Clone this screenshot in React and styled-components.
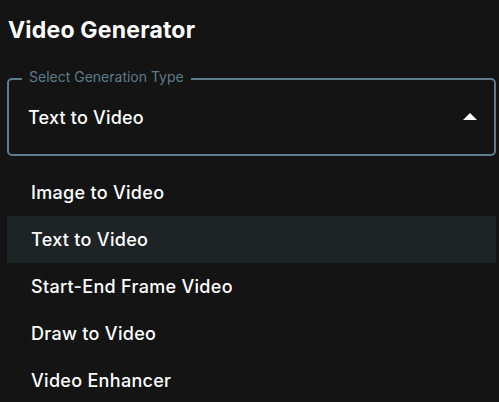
import React, { useState } from "react";
import styled, { createGlobalStyle } from "styled-components";

const GlobalStyle = createGlobalStyle`
    html, body {
        margin: 0;
        padding: 0;
        background: #141414;
        font-family: Inter, "Noto Sans", sans-serif;
        color: #ffffff;
    }
`;

const Page = styled.div`
    width: 499px;
    height: 402px;
    overflow: hidden;
    padding: 17px 3px 0 7px;
    box-sizing: border-box;
`;

const Title = styled.h1`
    margin: 0 0 0 1px;
    font-size: 23px;
    line-height: 27px;
    font-weight: 700;
    letter-spacing: 0.2px;
`;

const Field = styled.fieldset`
    margin: 34px 0 0 0;
    padding: 0 0 0 20px;
    height: 78px;
    box-sizing: border-box;
    border: 2px solid #5d7d8c;
    border-radius: 5px;
    display: flex;
    align-items: center;
    justify-content: space-between;
    position: relative;
    cursor: pointer;
`;

const Legend = styled.legend`
    position: absolute;
    top: -12px;
    left: 13px;
    padding: 0 7px;
    background: #141414;
    font-size: 14px;
    line-height: 17px;
    color: #5d7b8a;
    margin: 0;
`;

const Value = styled.span`
    font-size: 18px;
    line-height: 22px;
    font-weight: 500;
    letter-spacing: 0.2px;
    margin-top: 1px;
    margin-left: -1px;
`;

const Arrow = styled.svg`
    width: 14px;
    height: 7px;
    margin-right: 17px;
    margin-top: -2px;
`;

const Menu = styled.ul`
    list-style: none;
    margin: 13px 0 0 0;
    padding: 0;
`;

const Item = styled.li`
    height: 47px;
    display: flex;
    align-items: center;
    padding-left: 24px;
    font-size: 18px;
    font-weight: 500;
    letter-spacing: 0.3px;
    background: ${(p) => (p.$active ? "#1e2326" : "transparent")};
    cursor: pointer;
`;

const options = [
    "Image to Video",
    "Text to Video",
    "Start-End Frame Video",
    "Draw to Video",
    "Video Enhancer",
];

export default function App() {
    const [selected, setSelected] = useState("Text to Video");
    return (
        <>
            <GlobalStyle />
            <Page>
                <Title>Video Generator</Title>
                <Field>
                    <Legend>Select Generation Type</Legend>
                    <Value>{selected}</Value>
                    <Arrow viewBox="0 0 14 7">
                        <path d="M0 7 L7 0 L14 7 Z" fill="#ffffff" />
                    </Arrow>
                </Field>
                <Menu>
                    {options.map((o) => (
                        <Item key={o} $active={o === selected} onClick={() => setSelected(o)}>
                            {o}
                        </Item>
                    ))}
                </Menu>
            </Page>
        </>
    );
}
